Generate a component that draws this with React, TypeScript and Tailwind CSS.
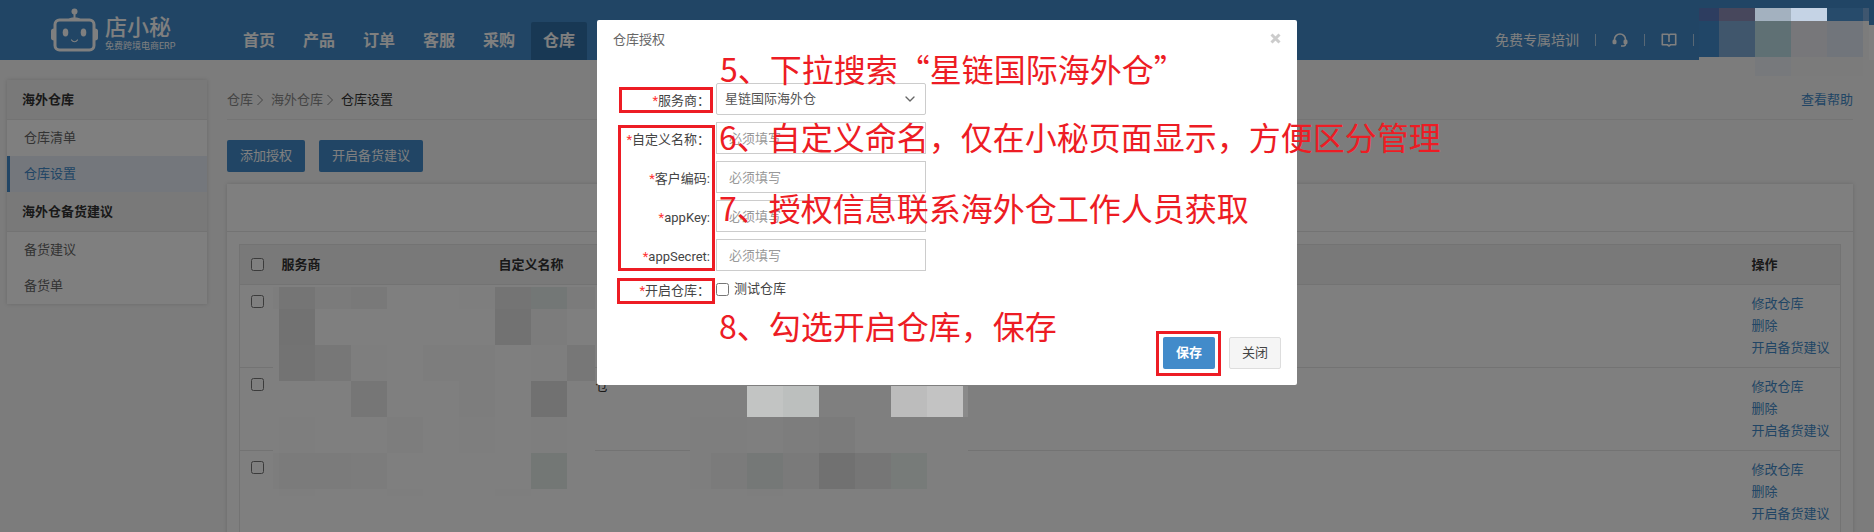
import { ChevronDown } from "lucide-react";

const navItems = ["首页", "产品", "订单", "客服", "采购", "仓库"];

const menuGroups = [
  { title: "海外仓库", items: ["仓库清单", "仓库设置"] },
  { title: "海外仓备货建议", items: ["备货建议", "备货单"] },
];

const tableRows = [
  { id: 1, text: "" },
  { id: 2, text: "仓" },
  { id: 3, text: "" },
];

const textFields = [
  { id: "name", label: "自定义名称：" },
  { id: "code", label: "客户编码:" },
  { id: "appKey", label: "appKey:" },
  { id: "appSecret", label: "appSecret:" },
];

// masked cells, one class per cell, "" = plain background
const providerMask = [
  ["bg-[#7d7d7d]", "bg-[#757575]", "bg-[#7b7b7b]", "bg-[#797979]", "", "", "bg-[#7e7e7e]", "bg-[#747474]", "bg-[#737776]", "bg-[#7b7b7b]"],
  ["", "bg-[#727272]", "", "", "", "", "", "bg-[#727272]", "bg-[#7c7c7c]", ""],
  ["", "bg-[#737373]", "bg-[#777777]", "bg-[#7e7e7e]", "", "bg-[#7d7d7d]", "bg-[#7d7d7d]", "", "bg-[#7e7e7e]", "bg-[#777777]"],
  ["", "", "", "bg-[#767676]", "", "", "bg-[#7d7d7d]", "", "bg-[#717171]", ""],
  ["", "bg-[#7e7e7e]", "", "", "bg-[#7d7d7d]", "", "bg-[#7e7e7e]", "", "bg-[#7e7e7e]", ""],
  ["bg-[#7d7d7d]", "bg-[#7b7b7b]", "bg-[#7b7b7b]", "bg-[#7c7c7c]", "", "", "", "", "bg-[#737775]", ""],
  ["", "bg-[#7e7e7e]", "", "", "bg-[#7e7e7e]", "", "", "bg-[#7e7e7e]", "", ""],
];

const detailMask = [
  ["", "", "bg-[#c2c4c3]", "bg-[#bcbfbe]", "", "", "bg-[#bcbcbc]", "bg-[#c3c3c3]", "bg-[#8a8a8a]"],
  ["bg-[#7e7e7e]", "bg-[#7e7e7e]", "", "bg-[#7d7d7d]", "bg-[#7b7b7b]", "", "", "", ""],
  ["bg-[#7e7e7e]", "bg-[#7b7b7b]", "bg-[#757877]", "bg-[#7a7a7a]", "bg-[#717171]", "bg-[#767676]", "bg-[#777b79]", "", ""],
  ["", "", "bg-[#7e7e7e]", "", "", "", "", "", ""],
];

const accountMask = [
  ["bg-[#2d3d60]", "bg-[#47475c]", "bg-[#a3b1bf]", "bg-[#c5d3e5]", "bg-[#274b6b]", "bg-[#3e566f]"],
  ["bg-[#214667]", "bg-[#40566c]", "bg-[#5f7074]", "bg-[#77777a]", "bg-[#71757b]", "bg-[#7c7c7c]"],
  ["", "", "bg-[#77797c]", "bg-[#7b7b7b]", "bg-[#7b7b7b]", ""],
];

const notes = [
  { text: "5、下拉搜索“星链国际海外仓”", pos: "left-[123px] top-8" },
  { text: "6、自定义命名，仅在小秘页面显示，方便区分管理", pos: "left-[122px] top-[100px]" },
  { text: "7、授权信息联系海外仓工作人员获取", pos: "left-[122px] top-[171px]" },
  { text: "8、勾选开启仓库，保存", pos: "left-[122px] top-[289px]" },
];

const frames = [
  "left-[22px] top-[67px] h-[26px] w-[94px]",
  "left-[21px] top-[105px] h-[146px] w-[97px]",
  "left-[20px] top-[258px] h-[26px] w-[98px]",
  "right-[76px] bottom-[9px] h-[45px] w-[65px]",
];

const Mask = ({ cells, className }: { cells: string[][]; className: string }) => (
  <div aria-hidden="true" className={`absolute grid ${className}`}>
    {cells.flat().map((cell, i) => (
      <span key={i} className={cell} />
    ))}
  </div>
);

const Logo = () => (
  <a href="#" className="flex items-end gap-[7px]">
    <svg width="47" height="44" viewBox="0 0 47 44" fill="none">
      <circle cx="23.5" cy="3.5" r="3" fill="#fff" />
      <path d="M23.5 5v6" stroke="#fff" strokeWidth="2" />
      <path d="M17 12c1-2 3-2.500 6.500-2.500S29 10 30 12z" fill="#fff" />
      <rect x="4" y="12" width="39" height="30" rx="4.500" stroke="#fff" strokeWidth="3" />
      <path d="M3 20.500C1 20.500 0 21.500 0 23v7c0 1.500 1 2.500 3 2.500zM44 20.500c2 0 3 1 3 2.500v7c0 1.500-1 2.500-3 2.500z" fill="#fff" />
      <ellipse cx="14.500" cy="24.500" rx="2.800" ry="4" fill="#fff" />
      <ellipse cx="32.500" cy="24.500" rx="2.800" ry="4" fill="#fff" />
      <path d="M20.500 32c1.500 2.300 4.500 2.300 6 0" stroke="#fff" strokeWidth="1.200" strokeLinecap="round" />
    </svg>
    <span className="flex flex-col text-white">
      <span className="text-[22px] leading-6 font-medium">店小秘</span>
      <span className="text-[9px] leading-3">免费跨境电商ERP</span>
    </span>
  </a>
);

const HeadsetIcon = () => (
  <svg width="16" height="16" viewBox="0 0 16 16" fill="none" stroke="#fff" strokeWidth="1.600">
    <path d="M2.500 9V7.500a5.500 5.500 0 0 1 11 0V9" />
    <path d="M13.500 10.500v1.500a2 2 0 0 1-2 2H9" />
    <rect x="1.300" y="8.300" width="2.400" height="3.200" rx=".8" fill="#fff" />
    <rect x="12.300" y="8.300" width="2.400" height="3.200" rx=".8" fill="#fff" />
  </svg>
);

const BookIcon = () => (
  <svg width="16" height="16" viewBox="0 0 16 16" fill="none" stroke="#fff" strokeWidth="1.600">
    <path d="M8 3.500L7 2.300H1.300v10.400h5L8 14l1.700-1.300h5V2.300H9z" strokeLinejoin="round" />
    <path d="M8 3.500V10" />
  </svg>
);

const Header = () => (
  <header className="flex h-15 bg-[#428bca] text-white">
    <div className="flex w-[231px] shrink-0 items-start pt-2 pl-[51px]">
      <Logo />
    </div>
    <nav className="flex items-end gap-1">
      {navItems.map((item) => (
        <a
          key={item}
          href="#"
          className={`flex h-[38px] items-center rounded-t-xs px-3 text-base font-bold ${
            item === "仓库" ? "bg-[#3071a9]" : ""
          }`}
        >
          {item}
        </a>
      ))}
    </nav>
    <div className="mr-[180px] ml-auto flex items-center gap-4 pt-5">
      <a href="#" className="text-sm">
        免费专属培训
      </a>
      <span className="h-3 w-px bg-white/60" />
      <button type="button" aria-label="客服">
        <HeadsetIcon />
      </button>
      <span className="h-3 w-px bg-white/60" />
      <button type="button" aria-label="帮助文档">
        <BookIcon />
      </button>
      <span className="h-3 w-px bg-white/60" />
    </div>
  </header>
);

const Sidebar = () => (
  <aside className="w-50 shrink-0 self-start bg-white shadow-[0_0_4px_rgba(0,0,0,0.15)]">
    {menuGroups.map((group) => (
      <div key={group.title}>
        <h3 className="flex h-10 items-center border-b border-[#e6e6e6] bg-[#f2f2f2] px-[15px] font-bold text-[#333]">
          {group.title}
        </h3>
        {group.items.map((item) => (
          <a
            key={item}
            href="#"
            className={`flex h-9 items-center border-l-3 pl-3.5 ${
              item === "仓库设置"
                ? "border-[#428bca] bg-[#e8eef8] text-[#428bca]"
                : "border-transparent text-[#666]"
            }`}
          >
            {item}
          </a>
        ))}
      </div>
    ))}
  </aside>
);

const Crumb = () => (
  <svg width="6" height="12" viewBox="0 0 6 12" fill="none" stroke="#888">
    <path d="M.5 1l5 5-5 5" />
  </svg>
);

const Content = () => (
  <main className="min-w-0 flex-1">
    <div className="flex h-10 items-center border-b border-[#e8e8e8]">
      <div className="flex items-center text-[#888]">
        <a href="#" className="mr-1">仓库</a>
        <Crumb />
        <a href="#" className="mr-1 ml-2">海外仓库</a>
        <Crumb />
        <span className="ml-2 text-[#333]">仓库设置</span>
      </div>
      <a href="#" className="ml-auto text-[#428bca]">
        查看帮助
      </a>
    </div>
    <div className="mt-5 flex gap-3.5">
      <button type="button" className="h-8 rounded-xs bg-[#428bca] px-[13px] text-white">
        添加授权
      </button>
      <button type="button" className="h-8 rounded-xs bg-[#428bca] px-[13px] text-white">
        开启备货建议
      </button>
    </div>
    <section className="mt-3 bg-white shadow-[0_0_4px_rgba(0,0,0,0.15)]">
      <div className="h-12 border-b border-[#e6e6e6]" />
      <div className="p-3">
        <table className="w-full table-fixed border-collapse border border-[#e6e6e6]">
          <colgroup>
            <col className="w-[34px]" />
            <col className="w-[217px]" />
            <col className="w-[97px]" />
            <col />
            <col className="w-[97px]" />
          </colgroup>
          <thead>
            <tr className="h-10 border-b border-[#e6e6e6] bg-[#f2f2f2] text-left text-[#333]">
              <th className="pl-[11px]">
                <input type="checkbox" aria-label="全选" className="block" />
              </th>
              <th className="pl-2">服务商</th>
              <th className="pl-2">自定义名称</th>
              <th />
              <th className="pl-2">操作</th>
            </tr>
          </thead>
          <tbody>
            {tableRows.map((row) => (
              <tr key={row.id} className="h-[83px] border-b border-[#e6e6e6] align-top">
                <td className="pt-2.5 pl-[11px]">
                  <input type="checkbox" aria-label="选择" className="block" />
                </td>
                <td />
                <td />
                <td className="pt-2 pl-2 leading-5 text-[#333]">{row.text}</td>
                <td className="pt-2 pl-2">
                  <div className="flex flex-col leading-[22px] whitespace-nowrap text-[#428bca]">
                    <a href="#">修改仓库</a>
                    <a href="#">删除</a>
                    <a href="#">开启备货建议</a>
                  </div>
                </td>
              </tr>
            ))}
          </tbody>
        </table>
      </div>
    </section>
  </main>
);

const Label = ({ htmlFor, text }: { htmlFor: string; text: string }) => (
  <label htmlFor={htmlFor} className="w-28 pt-1 pr-1.5 text-right whitespace-nowrap text-[#444]">
    <span className="text-[#f33]">*</span>
    {text}
  </label>
);

const AuthDialog = () => (
  <div
    role="dialog"
    aria-labelledby="dialog-title"
    className="relative flex w-[700px] flex-col rounded-xs bg-white"
  >
    <div className="flex h-10 items-center justify-between px-4">
      <h2 id="dialog-title" className="text-[#666]">
        仓库授权
      </h2>
      <button type="button" aria-label="关闭窗口" className="mb-1">
        <svg width="11" height="11" viewBox="0 0 11 11" stroke="#ccc" strokeWidth="3">
          <path d="M1.500 1.500l8 8m0-8l-8 8" />
        </svg>
      </button>
    </div>
    <form className="flex flex-col gap-[7px] pt-[23px] pl-[7px]">
      <div className="flex items-center">
        <Label htmlFor="provider" text="服务商：" />
        <div className="relative">
          <select
            id="provider"
            className="block h-8 w-[210px] appearance-none rounded-xs border border-[#ccc] bg-white px-2 text-[#555]"
          >
            <option>星链国际海外仓</option>
          </select>
          <ChevronDown className="pointer-events-none absolute top-2 right-2 size-4 text-[#666]" />
        </div>
      </div>
      {textFields.map((field) => (
        <div key={field.id} className="flex items-center">
          <Label htmlFor={field.id} text={field.label} />
          <input
            id={field.id}
            type="text"
            placeholder="必须填写"
            className="h-8 w-[210px] border border-[#ccc] px-3 placeholder:text-[#999]"
          />
        </div>
      ))}
      <div className="flex h-[22px] items-center">
        <Label htmlFor="warehouse" text="开启仓库：" />
        <input id="warehouse" type="checkbox" />
        <label htmlFor="warehouse" className="ml-[5px] text-[#444]">
          测试仓库
        </label>
      </div>
    </form>
    <div className="mt-[21px] flex justify-end gap-3.5 p-4">
      <button type="button" className="h-8 w-13 rounded-xs bg-[#428bca] font-bold text-white">
        保存
      </button>
      <button type="button" className="h-8 w-13 rounded-xs border border-[#ddd] bg-[#f5f5f5] text-[#444]">
        关闭
      </button>
    </div>

    {/* step notes over the form */}
    <div className="pointer-events-none absolute inset-0">
      {frames.map((frame) => (
        <span key={frame} className={`absolute border-3 border-[#ed1c24] ${frame}`} />
      ))}
      {notes.map((note) => (
        <p
          key={note.text}
          className={`absolute font-['Noto_Sans_CJK_SC',sans-serif] text-[32px] leading-8 whitespace-nowrap text-[#ed1c24] ${note.pos}`}
        >
          {note.text}
        </p>
      ))}
    </div>
  </div>
);

export default function App() {
  return (
    <div className="relative h-screen overflow-hidden bg-[#f8f8f8] font-[Roboto,'Noto_Sans_CJK_SC',sans-serif] text-[13px] leading-5">
      <Header />
      <div className="flex gap-5 pt-5 pr-[21px] pl-[7px]">
        <Sidebar />
        <Content />
      </div>
      <div className="absolute inset-0 flex items-start justify-center overflow-hidden bg-black/50 pt-5 pl-5">
        <Mask
          cells={providerMask}
          className="top-[287px] left-[273px] grid-cols-[6px_repeat(8,36px)_28px] grid-rows-[22px_repeat(5,36px)_7px] bg-[#7f7f7f]"
        />
        <Mask
          cells={detailMask}
          className="top-[386px] left-[690px] grid-cols-[21px_repeat(7,36px)_5px] grid-rows-[31px_36px_36px_7px] bg-[#7f7f7f]"
        />
        <Mask
          cells={accountMask}
          className="top-2 right-[5px] grid-cols-[20px_repeat(4,36px)_6px] grid-rows-[13px_36px_19px] bg-[#7c7c7c]"
        />
        <span className="absolute top-[25px] right-0 h-[35px] w-[5px] bg-[#7f7f7f]" />
        <AuthDialog />
      </div>
    </div>
  );
}
